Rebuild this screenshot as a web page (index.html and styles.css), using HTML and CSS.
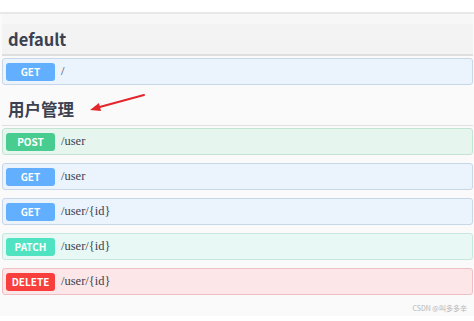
FILE: index.html
```html
<!DOCTYPE html>
<html lang="zh-CN">

<head>
    <meta charset="UTF-8">
    <title>接口文档</title>
    <link rel="stylesheet" href="styles.css">
</head>

<body>
    <div class="topbar"></div>
    <div class="page">
        <div class="tag tag-first">
            <h3 class="tag-title">default</h3>
        </div>
        <div class="op op-get">
            <span class="method">GET</span>
            <span class="path">/</span>
        </div>

        <div class="tag">
            <h3 class="tag-title">用户管理</h3>
        </div>
        <div class="op op-post">
            <span class="method">POST</span>
            <span class="path">/user</span>
        </div>
        <div class="op op-get">
            <span class="method">GET</span>
            <span class="path">/user</span>
        </div>
        <div class="op op-get">
            <span class="method">GET</span>
            <span class="path">/user/{id}</span>
        </div>
        <div class="op op-patch">
            <span class="method">PATCH</span>
            <span class="path">/user/{id}</span>
        </div>
        <div class="op op-delete">
            <span class="method">DELETE</span>
            <span class="path">/user/{id}</span>
        </div>
        <div class="mark">CSDN @叫多多辛</div>
    </div>

    <!-- 标注箭头 -->
    <svg class="arrow" width="60" height="20" viewBox="0 0 60 20">
        <line x1="56" y1="2" x2="8" y2="15" stroke="#e3262b" stroke-width="2" stroke-linecap="round" />
        <polygon points="2,17 11,10 13,18" fill="#e3262b" />
    </svg>
</body>

</html>
```

FILE: styles.css
```css
* {
    margin: 0;
    padding: 0;
    box-sizing: border-box;
}

body {
    background-color: #fff;
    font-family: "Noto Sans CJK SC", "Noto Sans", sans-serif;
    position: relative;
}

.topbar {
    height: 12px;
}

.page {
    border-top: 2px solid #e8e8e8;
    background-color: #fafafa;
    padding: 0 1px 0 2px;
    height: 304px;
}

.tag {
    display: flex;
    align-items: center;
    height: 33px;
    padding-left: 6px;
    border-bottom: 1px solid #e0e0e0;
    margin-bottom: 2px;
}

.tag-first {
    height: 42px;
    padding-top: 9px;
    background: linear-gradient(#f7f7f7 0, #f7f7f7 10px, #f3f3f3 10px);
    border-bottom: 2px solid #dedede;
}

.tag-title {
    font-size: 16.5px;
    font-weight: bold;
    color: #3b4151;
}

.op {
    display: flex;
    align-items: center;
    height: 27px;
    padding: 0 3px;
    border: 1px solid;
    border-radius: 3px;
    margin-bottom: 8px;
}

.method {
    width: 49px;
    height: 18px;
    line-height: 18px;
    border-radius: 3px;
    text-align: center;
    color: #fff;
    font-size: 10px;
    font-weight: bold;
}

.path {
    margin-left: 6px;
    font-family: "Liberation Serif", serif;
    font-size: 12.5px;
    color: #3b4151;
}

.op-get {
    background-color: #ebf3fc;
    border-color: #c7d6e8;
}

.op-get .method {
    background-color: #61affe;
}

.op-post {
    background-color: #e6f5ee;
    border-color: #c3e4d3;
}

.op-post .method {
    background-color: #49cc90;
}

.op-patch {
    background-color: #e8f8f4;
    border-color: #c6e6de;
}

.op-patch .method {
    background-color: #50e3c2;
}

.op-delete {
    background-color: #fce6e7;
    border-color: #eec0c4;
}

.op-delete .method {
    background-color: #f93e3e;
}

.mark {
    text-align: right;
    padding-right: 6px;
    margin-top: 9px;
    font-size: 7px;
    line-height: 8px;
    color: #b5b5b5;
}

.arrow {
    position: absolute;
    left: 88px;
    top: 93px;
}
```
